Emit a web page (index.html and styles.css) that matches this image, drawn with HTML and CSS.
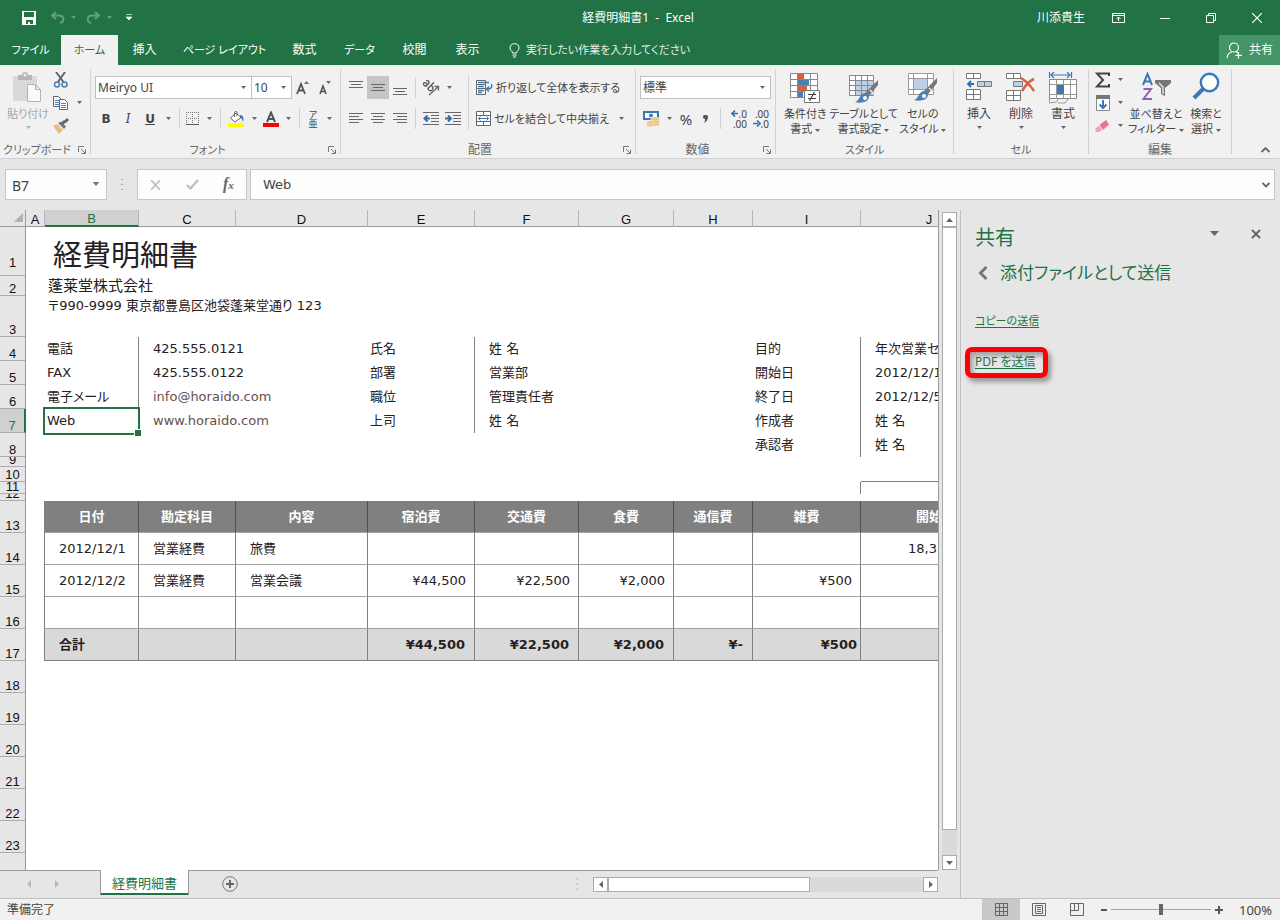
FILE: index.html
```html
<!DOCTYPE html>
<html lang="ja">
<head>
<meta charset="utf-8">
<title>経費明細書1 - Excel</title>
<link rel="stylesheet" href="styles.css">
</head>
<body>
<svg class="defs" aria-hidden="true">
  <symbol id="caret" viewBox="0 0 5 3"><path d="M0 0h5L2.500 3z" fill="currentColor"/></symbol>
  <symbol id="launch" viewBox="0 0 8 8"><path d="M.5 6V.5H6M3 3l4 4M7.500 3.500v4h-4" fill="none" stroke="#777"/></symbol>
</svg>
<div class="app">
  <header class="titlebar">
    <div class="quick">
      <button class="qbtn" aria-label="上書き保存"><svg width="14" height="14" viewBox="0 0 14 14"><path d="M0 0h14v14H0zM2 1v5h10V1zM4 9v4h2v-2h2v2h3V9z" fill="#fff" fill-rule="evenodd"/></svg></button>
      <button class="qbtn faded" aria-label="元に戻す"><svg width="15" height="13" viewBox="0 0 15 13"><path d="M6 1L2 4.500l4 3.500M2 4.500h7c5 0 6 6 1 7.500" fill="none" stroke="#fff" stroke-width="2"/></svg><svg class="caret"><use href="#caret"/></svg></button>
      <button class="qbtn faded" aria-label="やり直し"><svg width="15" height="13" viewBox="0 0 15 13"><path d="M9 1l4 3.500L9 8M13 4.500H6C1 4.500 0 10.500 5 12" fill="none" stroke="#fff" stroke-width="2"/></svg><svg class="caret"><use href="#caret"/></svg></button>
      <button class="qbtn" aria-label="クイック アクセス ツール バーのカスタマイズ"><svg width="6" height="7" viewBox="0 0 6 7"><path d="M0 .5h6M0 3h6L3 6z" fill="#fff" stroke="#fff" stroke-width=".6"/></svg></button>
    </div>
    <div class="doc-title">経費明細書1&nbsp; -&nbsp; Excel</div>
    <div class="window-controls">
      <span class="user">川添貴生</span>
      <button class="wbtn" aria-label="リボンの表示オプション"><svg width="14" height="12" viewBox="0 0 14 12"><path d="M.5 1.500h12v9H.5zM.5 3.500h12M6.500 9V5M4.500 7l2-2 2 2" fill="none" stroke="#fff"/></svg></button>
      <button class="wbtn" aria-label="最小化"><svg width="10" height="10" viewBox="0 0 10 10"><path d="M0 5.500h10" stroke="#fff"/></svg></button>
      <button class="wbtn" aria-label="元に戻す (縮小)"><svg width="10" height="10" viewBox="0 0 10 10"><path d="M.5 2.500h7v7h-7zM2.500 2V.5h7v7H8" fill="none" stroke="#fff"/></svg></button>
      <button class="wbtn" aria-label="閉じる"><svg width="10" height="10" viewBox="0 0 10 10"><path d="M0 0l10 10M10 0L0 10" stroke="#fff" stroke-width="1.200"/></svg></button>
    </div>
  </header>

  <nav class="tabs">
    <button class="tab t61 kana">ファイル</button>
    <button class="tab t57 kana active">ホーム</button>
    <button class="tab t53">挿入</button>
    <button class="tab t107 kana">ページ レイアウト</button>
    <button class="tab t53">数式</button>
    <button class="tab t57 kana">データ</button>
    <button class="tab t53">校閲</button>
    <button class="tab t53">表示</button>
    <button class="tell kana"><svg width="11" height="15" viewBox="0 0 11 15"><path d="M3.500 10C3.500 8 1 7.500 1 4.800 1 2 3 .700 5.500.700S10 2 10 4.800C10 7.500 7.500 8 7.500 10zM3.500 12h4M4 14h3" fill="none" stroke="#fff"/></svg>実行したい作業を入力してください</button>
    <button class="share"><svg width="17" height="17" viewBox="0 0 17 17"><circle cx="8" cy="5.500" r="4.500" fill="none" stroke="#fff" stroke-width="1.200"/><path d="M1 16c.5-4 2-5.500 5-6M10 9.500l2 1.500M12.500 10v6.500M9.500 13.300h6.500" fill="none" stroke="#fff" stroke-width="1.200"/></svg>共有</button>
  </nav>

  <section class="ribbon">
    <div class="group g-clip">
      <div class="gbody">
        <button class="big paste"><svg width="30" height="32" viewBox="0 0 30 32"><path d="M0 4h24v25H0z" fill="#d9d9d9"/><path d="M5 3h4c0-4 6-4 6 0h4v5H5z" fill="#b5b5b5"/><circle cx="12" cy="3" r="1.500" fill="#f0f0f0"/><path d="M14.500 12.500h8l5 5v12h-13zM22.500 12.500v5h5" fill="#fafafa" stroke="#b9aebb"/></svg><span>貼り付け</span><svg class="caret"><use href="#caret"/></svg></button>
        <div class="stack">
          <button class="ib" aria-label="切り取り"><svg width="16" height="16" viewBox="0 0 16 16"><path d="M3 0l7.500 10M12 0L5 10" stroke="#666" stroke-width="2"/><circle cx="4" cy="12.500" r="2.500" fill="none" stroke="#4a80b5" stroke-width="1.500"/><circle cx="11.500" cy="12.500" r="2.500" fill="none" stroke="#4a80b5" stroke-width="1.500"/></svg></button>
          <button class="ib" aria-label="コピー"><svg width="16" height="16" viewBox="0 0 16 16"><path d="M.5 1.500h5l3 3v7h-8z" fill="#fff" stroke="#666"/><path d="M2 5.500h4M2 7.500h4M2 9.500h4" stroke="#4a80b5"/><path d="M6.500 4.500h5l3 3v7h-8z" fill="#fff" stroke="#666"/><path d="M8 8.500h5M8 10.500h5M8 12.500h5" stroke="#4a80b5"/></svg></button>
          <button class="ib" aria-label="書式のコピー"><svg width="16" height="16" viewBox="0 0 16 16"><path d="M0 8l4-2 6 6-4 4z" fill="#e8be7c"/><path d="M5 5l3-1.500 5 5L11 11z" fill="#777"/><path d="M9 6l3-3M12 4l3-3" stroke="#666" stroke-width="3"/></svg></button>
        </div>
        <button class="cb copy-caret" aria-label="コピーのオプション"><svg class="caret"><use href="#caret"/></svg></button>
      </div>
      <div class="glabel kana"><span>クリップボード</span><button class="launch" aria-label="クリップボードの設定"><svg width="8" height="8"><use href="#launch"/></svg></button></div>
    </div>

    <div class="group g-font">
      <div class="gbody col">
        <div class="row">
          <label class="combo font-name"><select aria-label="フォント"><option>Meiryo UI</option></select><svg class="caret"><use href="#caret"/></svg></label>
          <label class="combo font-size"><select aria-label="フォント サイズ"><option>10</option></select><svg class="caret"><use href="#caret"/></svg></label>
          <button class="ib" aria-label="フォント サイズの拡大"><svg width="14" height="16" viewBox="0 0 14 16"><path d="M1 14L5 4l4 10M2.500 10.500h5" fill="none" stroke="#555" stroke-width="1.800"/><path d="M8 4h5l-2.500-3z" fill="#3b78b5"/></svg></button>
          <button class="ib" aria-label="フォント サイズの縮小"><svg width="14" height="16" viewBox="0 0 14 16"><path d="M2 14l3-8 3 8M3 11.500h4" fill="none" stroke="#555" stroke-width="1.600"/><path d="M8 1h5l-2.500 3z" fill="#3b78b5"/></svg></button>
        </div>
        <div class="row">
          <button class="ib fb">B</button><button class="ib fi">I</button><button class="ib fu">U</button><button class="cb" aria-label="下線のオプション"><svg class="caret"><use href="#caret"/></svg></button>
          <i class="sep"></i>
          <button class="ib s" aria-label="罫線"><svg width="14" height="14" viewBox="0 0 14 14"><path d="M.5 0v12M6.500 0v12M12.500 0v12M0 .5h13M0 6.500h13" stroke="#777" stroke-dasharray="1 1"/><path d="M0 12.500h13" stroke="#555"/></svg></button><button class="cb" aria-label="罫線のオプション"><svg class="caret"><use href="#caret"/></svg></button>
          <i class="sep"></i>
          <button class="ib" aria-label="塗りつぶしの色"><svg width="16" height="16" viewBox="0 0 16 16"><path d="M2.500 7L8 2l5 4.500L7 11z" fill="#fff" stroke="#666"/><path d="M6.500 6V1.500C6.500 0 9 0 9 1.500V5" fill="none" stroke="#666"/><path d="M12 4c4 0 4 4 3 7-1-3-1-4-3-4z" fill="#3b78b5"/><path d="M0 12h16v4H0z" fill="#ff0"/></svg></button><button class="cb" aria-label="塗りつぶしのオプション"><svg class="caret"><use href="#caret"/></svg></button>
          <button class="ib m" aria-label="フォントの色"><svg width="16" height="16" viewBox="0 0 16 16"><path d="M4 11L8 1.500l4 9.500M5.500 8h5" fill="none" stroke="#555" stroke-width="2"/><path d="M0 12h16v4H0z" fill="#f00"/></svg></button><button class="cb" aria-label="フォントの色のオプション"><svg class="caret"><use href="#caret"/></svg></button>
          <i class="sep"></i>
          <button class="ib s ruby"><span>ア</span><span>亜</span></button><button class="cb" aria-label="ふりがなのオプション"><svg class="caret"><use href="#caret"/></svg></button>
        </div>
      </div>
      <div class="glabel kana"><span>フォント</span><button class="launch" aria-label="フォントの設定"><svg width="8" height="8"><use href="#launch"/></svg></button></div>
    </div>

    <div class="group g-align">
      <div class="gbody">
        <div class="col">
          <div class="row">
            <button class="ib" aria-label="上揃え"><svg width="14" height="14" viewBox="0 0 14 14"><path d="M0 .5h14M2 3.500h10M0 6.500h14" stroke="#666"/></svg></button>
            <button class="ib on" aria-label="上下中央揃え"><svg width="14" height="14" viewBox="0 0 14 14"><path d="M0 3.500h14M2 6.500h10M0 9.500h14" stroke="#666"/></svg></button>
            <button class="ib" aria-label="下揃え"><svg width="14" height="14" viewBox="0 0 14 14"><path d="M0 7.500h14M2 10.500h10M0 13.500h14" stroke="#666"/></svg></button>
            <i class="sep"></i>
            <button class="ib" aria-label="方向"><svg width="17" height="16" viewBox="0 0 17 16"><g transform="rotate(45 6 6)" fill="none" stroke="#555" stroke-width="1.300"><path d="M0 4c2-2 4-1 4 1v4M4 6C0 5-1 9 1.500 9 3 9 4 8 4 7"/><path d="M7 0v9M7 5c1-2 4-1 4 1.500S8 10 7 8"/></g><path d="M6 15l9-8M11.500 6.500H15.500V10.500" fill="none" stroke="#666" stroke-width="1.300"/></svg></button><button class="cb" aria-label="方向のオプション"><svg class="caret"><use href="#caret"/></svg></button>
          </div>
          <div class="row">
            <button class="ib" aria-label="左揃え"><svg width="14" height="12" viewBox="0 0 14 12"><path d="M0 .5h14M0 3.500h10M0 6.500h14M0 9.500h10" stroke="#666"/></svg></button>
            <button class="ib" aria-label="中央揃え"><svg width="14" height="12" viewBox="0 0 14 12"><path d="M0 .5h14M2 3.500h10M0 6.500h14M2 9.500h10" stroke="#666"/></svg></button>
            <button class="ib" aria-label="右揃え"><svg width="14" height="12" viewBox="0 0 14 12"><path d="M0 .5h14M4 3.500h10M0 6.500h14M4 9.500h10" stroke="#666"/></svg></button>
            <i class="sep"></i>
            <button class="ib" aria-label="インデントを減らす"><svg width="16" height="14" viewBox="0 0 16 14"><path d="M0 .5h16M8 3.500h8M8 6.500h8M8 9.500h8M0 12.500h16" stroke="#666"/><path d="M7 6.500H2M4.500 3.500l-3 3 3 3" fill="none" stroke="#2f6fae" stroke-width="2"/></svg></button>
            <button class="ib" aria-label="インデントを増やす"><svg width="16" height="14" viewBox="0 0 16 14"><path d="M0 .5h16M8 3.500h8M8 6.500h8M8 9.500h8M0 12.500h16" stroke="#666"/><path d="M0 6.500h5M3 3.500l3 3-3 3" fill="none" stroke="#2f6fae" stroke-width="2"/></svg></button>
          </div>
        </div>
        <i class="sep long"></i>
        <div class="col">
          <button class="tb"><svg width="17" height="16" viewBox="0 0 17 16"><path d="M.5.5h9v4h-9zM.5 4.500v4h9v-4M.5 8.500v6h9v-6" fill="#fff" stroke="#666"/><path d="M2 2.500h11M2 6.500h6M2 10.500h6M2 12.500h4M15.500 4c1 4-1 5-4 5M13 6.500L10.500 9l2.500 2.500" fill="none" stroke="#3b78b5" stroke-width="1.400"/></svg>折り返して全体を表示する</button>
          <button class="tb"><svg width="15" height="15" viewBox="0 0 15 15"><path d="M.5.5h14v14H.5zM.5 4.500h14M.5 10.500h14M7.500.5v4M7.500 10.500v4" fill="#fff" stroke="#666"/><path d="M2 7.500h11M4.500 5.500l-2 2 2 2M10.500 5.500l2 2-2 2" fill="none" stroke="#3b78b5"/></svg>セルを結合して中央揃え<svg class="caret end"><use href="#caret"/></svg></button>
        </div>
      </div>
      <div class="glabel"><span>配置</span><button class="launch" aria-label="配置の設定"><svg width="8" height="8"><use href="#launch"/></svg></button></div>
    </div>

    <div class="group g-num">
      <div class="gbody col">
        <div class="row"><label class="combo num-format"><select aria-label="数値の書式"><option>標準</option></select><svg class="caret"><use href="#caret"/></svg></label></div>
        <div class="row">
          <button class="ib" aria-label="通貨表示形式"><svg width="17" height="16" viewBox="0 0 17 16"><path d="M0 0h16v9H0z" fill="#3b78b5"/><path d="M2 2h12v5H2z" fill="#fff"/><circle cx="8" cy="4.500" r="2" fill="#3b78b5"/><g fill="#ecc27e" stroke="#f0f0f0" stroke-width=".5"><ellipse cx="12" cy="13" rx="4.500" ry="2"/><ellipse cx="12" cy="10.500" rx="4.500" ry="2"/><ellipse cx="12" cy="8" rx="4.500" ry="2"/><ellipse cx="7" cy="14" rx="3.500" ry="1.800"/><ellipse cx="7" cy="11.500" rx="3.500" ry="1.800"/></g></svg></button><button class="cb" aria-label="通貨のオプション"><svg class="caret"><use href="#caret"/></svg></button>
          <button class="ib m pct">%</button>
          <button class="ib m" aria-label="桁区切りスタイル"><svg width="6" height="8" viewBox="0 0 6 8"><path d="M0 2c0-3 5-3 5 0 0 3-2 5-4 6 1-2 1-3 1-4-1 0-2-1-2-2z" fill="#555"/></svg></button>
          <i class="sep"></i>
          <button class="ib dec" aria-label="小数点以下の表示桁数を増やす"><span><svg width="8" height="7" viewBox="0 0 8 7"><path d="M7 3.500H2M4 .5l-3 3 3 3" fill="none" stroke="#2f6fae" stroke-width="1.600"/></svg>.0</span><span>.00</span></button>
          <button class="ib dec" aria-label="小数点以下の表示桁数を減らす"><span>.00</span><span><svg width="8" height="7" viewBox="0 0 8 7"><path d="M0 3.500h5M4 .5l3 3-3 3" fill="none" stroke="#2f6fae" stroke-width="1.600"/></svg>.0</span></button>
        </div>
      </div>
      <div class="glabel"><span>数値</span><button class="launch" aria-label="数値の設定"><svg width="8" height="8"><use href="#launch"/></svg></button></div>
    </div>

    <div class="group g-style">
      <div class="gbody">
        <button class="big w52 kana"><svg width="30" height="32" viewBox="0 0 30 32"><path d="M.5 1.500h27v24H.5z" fill="#fff"/><path d="M8 2h6v5H8zM8 14h9v5H8z" fill="#d8603c"/><path d="M8 8h11v5H8zM8 20h5v5H8z" fill="#4a80b5"/><path d="M.5 1.500h27v24H.5zM.5 7.500h27M.5 13.500h27M.5 19.500h27M7.500 1.500v24M20.500 1.500v24" fill="none" stroke="#888"/><path d="M14.500 18.500h15v12h-15z" fill="#fff" stroke="#777"/><path d="M18 22.500h8M18 26.500h8M24.500 20l-5 9" stroke="#444" stroke-width="1.200"/></svg><span>条件付き<br>書式 <svg class="caret"><use href="#caret"/></svg></span></button>
        <button class="big w66 kana"><svg width="30" height="32" viewBox="0 0 30 32"><path d="M.5 3.500h24v20H.5z" fill="#fff"/><path d="M7 9h17v14H7z" fill="#bdd0e9"/><path d="M.5 3.500h24v20H.5zM.5 8.500h24M.5 13.500h24M.5 18.500h24M6.500 3.500v20M12.500 3.500v20M18.500 3.500v20" fill="none" stroke="#888"/><path d="M29 8v5L20 24l-4-3z" fill="#777"/><path d="M21 18l4 4" stroke="#f0f0f0" stroke-width="1.500"/><path d="M6 30c5-1 4-9 11-9 5 2 3 8-2 9-3 1-6 1-9 0z" fill="#4a80b5"/><circle cx="16" cy="26" r="2" fill="#fff"/></svg><span>テーブルとして<br>書式設定 <svg class="caret"><use href="#caret"/></svg></span></button>
        <button class="big w54 kana"><svg width="30" height="32" viewBox="0 0 30 32"><path d="M.5 1.500h25v21H.5z" fill="#fff"/><path d="M6 7h13v10H6z" fill="#bdd0e9"/><path d="M.5 1.500h25v21H.5zM.5 6.500h25M.5 17.500h25M5.500 1.500v21M19.500 1.500v21" fill="none" stroke="#999"/><path d="M29 6v5L20 22l-4-3z" fill="#777"/><path d="M21 16l4 4" stroke="#f0f0f0" stroke-width="1.500"/><path d="M6 28c5-1 4-9 11-9 5 2 3 8-2 9-3 1-6 1-9 0z" fill="#4a80b5"/><circle cx="16" cy="24" r="2" fill="#fff"/></svg><span>セルの<br>スタイル <svg class="caret"><use href="#caret"/></svg></span></button>
      </div>
      <div class="glabel kana"><span>スタイル</span></div>
    </div>

    <div class="group g-cell">
      <div class="gbody">
        <button class="big w42"><svg width="28" height="32" viewBox="0 0 28 32"><path d="M1.500 1.500h14v5h-14zM8.500 1.500v5M1.500 17.500h14v10h-14zM1.500 22.500h14M8.500 17.500v10" fill="#fff" stroke="#777"/><path d="M12.500 9.500h14v5h-14zM19.500 9.500v5" fill="#bdd0e9" stroke="#777"/><path d="M9 12H4M6 9l-3 3 3 3" fill="none" stroke="#2f6fae" stroke-width="1.800"/></svg><span>挿入</span><svg class="caret"><use href="#caret"/></svg></button>
        <button class="big w42"><svg width="30" height="32" viewBox="0 0 30 32"><path d="M.5 1.500h14v5H.5zM7.500 1.500v5M.5 18.500h14v10H.5zM.5 23.500h14M7.500 18.500v10" fill="#fff" stroke="#777"/><path d="M7.500 9.500h9v5h-9z" fill="#bdd0e9" stroke="#777"/><path d="M15 6c5 3 9 7 13 13M28 7c-5 2-9 7-12 12" fill="none" stroke="#d8603c" stroke-width="2.500"/></svg><span>削除</span><svg class="caret"><use href="#caret"/></svg></button>
        <button class="big w42"><svg width="30" height="32" viewBox="0 0 30 32"><path d="M1.500 0v6M23.500 0v6M3 3h19M6 0L3 3l3 3M19 0l3 3-3 3" fill="none" stroke="#3b78b5" stroke-width="1.200"/><path d="M1.500 7.500h27v19h-27z" fill="#fff" stroke="#888"/><path d="M1.500 12.500h27M1.500 22.500h27M8.500 7.500v19M15.500 7.500v19M22.500 7.500v19M1.500 27v4l7-1 2-3M10 31h7l3-4" fill="none" stroke="#999"/><path d="M9 13h7v9H9z" fill="#3b78b5"/></svg><span>書式</span><svg class="caret"><use href="#caret"/></svg></button>
      </div>
      <div class="glabel kana"><span>セル</span></div>
    </div>

    <div class="group g-edit">
      <div class="gbody">
        <div class="stack">
          <button class="ib wide" aria-label="オート SUM"><svg width="16" height="16" viewBox="0 0 16 16"><path d="M14 4V1.500H2L8 8l-6 6.500h12V12" fill="none" stroke="#444" stroke-width="2"/></svg><svg class="caret"><use href="#caret"/></svg></button>
          <button class="ib wide" aria-label="フィル"><svg width="16" height="16" viewBox="0 0 16 16"><path d="M1.500.5h13v15h-13z" fill="#fff" stroke="#888"/><path d="M1 0h14v4H1z" fill="#777"/><path d="M8 5v8M4.500 9.500L8 13l3.500-3.500" fill="none" stroke="#3b78b5" stroke-width="2"/></svg><svg class="caret"><use href="#caret"/></svg></button>
          <button class="ib wide" aria-label="クリア"><svg width="16" height="14" viewBox="0 0 16 14"><path d="M4.500 6L11 1l3 4.500L8 11z" fill="#e8768a"/><path d="M4 6.500L7 11l-3 2H1l-1-3z" fill="#efa3b0"/></svg><svg class="caret"><use href="#caret"/></svg></button>
        </div>
        <button class="big w58 kana"><svg width="30" height="32" viewBox="0 0 30 32"><path d="M2 13L6.500 2 11 13M3.500 9.500h6" fill="none" stroke="#3b78b5" stroke-width="2"/><path d="M2.500 17H10L2.500 27H11" fill="none" stroke="#9160b5" stroke-width="2"/><path d="M14 8h16v3l-6 5v8l-4-2v-6l-6-5z" fill="#777"/><path d="M18 11l4 4v7" fill="none" stroke="#eee" stroke-width="1.300"/></svg><span>並べ替えと<br>フィルター <svg class="caret"><use href="#caret"/></svg></span></button>
        <button class="big w42 kana"><svg width="28" height="32" viewBox="0 0 28 32"><circle cx="17.500" cy="10.500" r="8.700" fill="#fff" stroke="#3b78b5" stroke-width="2.400"/><path d="M11 17l-9 9" stroke="#3b78b5" stroke-width="4"/></svg><span>検索と<br>選択 <svg class="caret"><use href="#caret"/></svg></span></button>
      </div>
      <div class="glabel"><span>編集</span></div>
    </div>
    <button class="collapse" aria-label="リボンを折りたたむ"><svg width="9" height="6" viewBox="0 0 9 6"><path d="M.5 5l4-4 4 4" fill="none" stroke="#666" stroke-width="1.800"/></svg></button>
  </section>

  <section class="formula">
    <label class="namebox"><input type="text" value="B7" aria-label="名前ボックス"><svg class="caret"><use href="#caret"/></svg></label>
    <span class="grip"></span>
    <div class="fx">
      <button aria-label="キャンセル"><svg width="11" height="10" viewBox="0 0 11 10"><path d="M1 0l9 10M10 0L1 10" stroke="#c0c0c0" stroke-width="1.800"/></svg></button>
      <button aria-label="入力"><svg width="13" height="11" viewBox="0 0 13 11"><path d="M1 6l3.500 3.500L12 1" fill="none" stroke="#c0c0c0" stroke-width="2.400"/></svg></button>
      <button class="fxb" aria-label="関数の挿入"><em>f</em><small>x</small></button>
    </div>
    <label class="fbox"><input type="text" value="Web" aria-label="数式バー"><svg width="8" height="6" viewBox="0 0 8 6"><path d="M.5 1L4 4.500 7.500 1" fill="none" stroke="#666" stroke-width="1.800"/></svg></label>
  </section>

  <main class="work">
    <div class="book">
      <div class="sheet">
        <table>
          <colgroup><col class="cn"><col class="ca"><col class="c-b"><col class="cc"><col class="c-d"><col class="ce"><col class="cf"><col class="cg"><col class="ch"><col class="ci"><col class="cj"></colgroup>
          <thead><tr><th class="corner"><svg width="9" height="9" viewBox="0 0 9 9"><path d="M9 0v9H0z" fill="#b0b0b0"/></svg></th><th>A</th><th class="sel">B</th><th>C</th><th>D</th><th>E</th><th>F</th><th>G</th><th>H</th><th>I</th><th>J</th></tr></thead>
          <tbody>
            <tr class="h49"><th><div>1</div></th><td></td><td class="title" colspan="9">経費明細書</td></tr>
            <tr class="h20"><th><div>2</div></th><td></td><td class="company" colspan="9">蓬莱堂株式会社</td></tr>
            <tr class="h41"><th><div>3</div></th><td></td><td class="address" colspan="9">〒990-9999 東京都豊島区池袋蓬莱堂通り 123</td></tr>
            <tr class="h24"><th><div>4</div></th><td></td><td class="vr">電話</td><td class="in" colspan="2">425.555.0121</td><td class="vr">氏名</td><td class="in" colspan="3">姓 名</td><td class="vr">目的</td><td class="in">年次営業セミナー</td></tr>
            <tr class="h24"><th><div>5</div></th><td></td><td class="vr">FAX</td><td class="in" colspan="2">425.555.0122</td><td class="vr">部署</td><td class="in" colspan="3">営業部</td><td class="vr">開始日</td><td class="in">2012/12/1</td></tr>
            <tr class="h24"><th><div>6</div></th><td></td><td class="vr">電子メール</td><td class="in link" colspan="2">info@horaido.com</td><td class="vr">職位</td><td class="in" colspan="3">管理責任者</td><td class="vr">終了日</td><td class="in">2012/12/5</td></tr>
            <tr class="h24"><th class="sel"><div>7</div></th><td></td><td class="vr active-cell">Web</td><td class="in link" colspan="2">www.horaido.com</td><td class="vr">上司</td><td class="in" colspan="3">姓 名</td><td class="vr">作成者</td><td class="in">姓 名</td></tr>
            <tr class="h24"><th><div>8</div></th><td colspan="8"></td><td class="vr">承認者</td><td class="in">姓 名</td></tr>
            <tr class="h10"><th><div>9</div></th><td colspan="10"></td></tr>
            <tr class="h15"><th><div>10</div></th><td colspan="9"></td><td class="hr"></td></tr>
            <tr class="h12"><th><div>11</div></th><td colspan="9" class="vr"></td><td></td></tr>
            <tr class="h7"><th><div>12</div></th><td colspan="10"></td></tr>
            <tr class="h32 head"><th><div>13</div></th><td class="edge"></td><td>日付</td><td>勘定科目</td><td>内容</td><td>宿泊費</td><td>交通費</td><td>食費</td><td>通信費</td><td>雑費</td><td>開始</td></tr>
            <tr class="h32 line"><th><div>14</div></th><td class="edge"></td><td class="in">2012/12/1</td><td class="in">営業経費</td><td class="in">旅費</td><td></td><td></td><td></td><td></td><td></td><td class="meter">18,3</td></tr>
            <tr class="h32 line"><th><div>15</div></th><td class="edge"></td><td class="in">2012/12/2</td><td class="in">営業経費</td><td class="in">営業会議</td><td class="num">¥44,500</td><td class="num">¥22,500</td><td class="num">¥2,000</td><td></td><td class="num">¥500</td><td></td></tr>
            <tr class="h32 line"><th><div>16</div></th><td class="edge"></td><td></td><td></td><td></td><td></td><td></td><td></td><td></td><td></td><td></td></tr>
            <tr class="h32 line total"><th><div>17</div></th><td class="edge"></td><td class="in">合計</td><td></td><td></td><td class="num">¥44,500</td><td class="num">¥22,500</td><td class="num">¥2,000</td><td class="num">¥-</td><td class="num tight">¥500</td><td></td></tr>
            <tr class="h32"><th><div>18</div></th><td colspan="10"></td></tr>
            <tr class="h32"><th><div>19</div></th><td colspan="10"></td></tr>
            <tr class="h32"><th><div>20</div></th><td colspan="10"></td></tr>
            <tr class="h32"><th><div>21</div></th><td colspan="10"></td></tr>
            <tr class="h32"><th><div>22</div></th><td colspan="10"></td></tr>
            <tr class="h32"><th><div>23</div></th><td colspan="10"></td></tr>
            <tr class="h32"><th><div></div></th><td colspan="10"></td></tr>
          </tbody>
        </table>
      </div>
      <div class="vscroll">
        <button aria-label="上へ"><svg width="7" height="4" viewBox="0 0 7 4"><path d="M0 4h7L3.500 0z" fill="#666"/></svg></button>
        <div class="vtrack"><div class="vthumb"></div></div>
        <button aria-label="下へ"><svg width="7" height="4" viewBox="0 0 7 4"><path d="M0 0h7L3.500 4z" fill="#666"/></svg></button>
      </div>
      <div class="sheetbar">
        <div class="navs"><svg width="4" height="8" viewBox="0 0 4 8"><path d="M4 0v8L0 4z" fill="#b8b8b8"/></svg><svg width="4" height="8" viewBox="0 0 4 8"><path d="M0 0v8l4-4z" fill="#b8b8b8"/></svg></div>
        <button class="sheet-tab">経費明細書</button>
        <button class="add" aria-label="新しいシート"><svg width="16" height="16" viewBox="0 0 16 16"><circle cx="8" cy="8" r="7.300" fill="none" stroke="#777"/><path d="M4 8h8M8 4v8" stroke="#666" stroke-width="2"/></svg></button>
        <span class="grip"></span>
        <div class="hscroll">
          <button aria-label="左へ"><svg width="4" height="7" viewBox="0 0 4 7"><path d="M4 0v7L0 3.500z" fill="#666"/></svg></button>
          <div class="htrack"><div class="hthumb"></div></div>
          <button aria-label="右へ"><svg width="4" height="7" viewBox="0 0 4 7"><path d="M0 0v7l4-3.500z" fill="#666"/></svg></button>
        </div>
      </div>
    </div>
    <aside class="pane">
      <div class="pane-head"><h2>共有</h2><button aria-label="作業ウィンドウのオプション"><svg width="9" height="5" viewBox="0 0 9 5"><path d="M0 0h9L4.500 5z" fill="#666"/></svg></button><button aria-label="閉じる"><svg width="10" height="10" viewBox="0 0 10 10"><path d="M1 1l8 8M9 1L1 9" stroke="#666" stroke-width="2"/></svg></button></div>
      <div class="pane-sub"><button aria-label="戻る"><svg width="10" height="14" viewBox="0 0 10 14"><path d="M8.500 1L2.500 7l6 6" fill="none" stroke="#777" stroke-width="3"/></svg></button><h3>添付ファイルとして送信</h3></div>
      <div class="links"><a href="#" class="kana">コピーの送信</a><a href="#" class="marked">PDF を送信</a></div>
    </aside>
  </main>

  <footer class="status">
    <span class="ready">準備完了</span>
    <button class="view on" aria-label="標準"><svg width="13" height="13" viewBox="0 0 13 13"><path d="M.5.500h12v12H.5zM.5 4.500h12M.5 8.500h12M4.500.5v12M8.500.5v12" fill="none" stroke="#666"/></svg></button>
    <button class="view" aria-label="ページ レイアウト"><svg width="14" height="13" viewBox="0 0 14 13"><path d="M.5.500h13v12H.5zM3.500 2.500h7v8h-7zM5 4.500h4M5 6.500h4M5 8.500h4" fill="none" stroke="#666"/></svg></button>
    <button class="view" aria-label="改ページ プレビュー"><svg width="14" height="13" viewBox="0 0 14 13"><path d="M.5.500h13v12H.5zM4.500.5v7M8.500.5v7M.5 7.500h8" fill="none" stroke="#666"/></svg></button>
    <button class="zoom" aria-label="縮小"><svg width="6" height="8" viewBox="0 0 6 8"><path d="M0 4h6" stroke="#555" stroke-width="2"/></svg></button>
    <input class="slider" type="range" min="0" max="200" value="100" aria-label="ズーム">
    <button class="zoom" aria-label="拡大"><svg width="8" height="8" viewBox="0 0 8 8"><path d="M0 4h8M4 0v8" stroke="#555" stroke-width="2"/></svg></button>
    <span class="percent">100%</span>
  </footer>
</div>
</body>
</html>
```

FILE: styles.css
```css
* { box-sizing: border-box; }

body {
  margin: 0;
  font: 12px/16px "Noto Sans", "Noto Sans CJK JP", sans-serif;
  font-feature-settings: "palt";
  color: #444;
  background: #e6e6e6;
}

button, input, select {
  font: inherit;
  font-feature-settings: inherit;
  color: inherit;
  border: 0;
  padding: 0;
  margin: 0;
  background: none;
  border-radius: 0;
}

svg { display: block; flex: none; }
.defs { position: absolute; width: 0; height: 0; }
.caret { width: 5px; height: 3px; color: #666; }
.kana { font-size: 11px; }

.app { display: flex; flex-direction: column; height: 100vh; overflow: hidden; }

/* title bar */
.titlebar {
  display: grid;
  grid-template-columns: 1fr auto 1fr;
  align-items: center;
  height: 35px;
  flex: none;
  background: #217346;
  color: #fff;
}
.quick { display: flex; align-items: center; padding-left: 22px; gap: 14px; }
.qbtn { display: flex; align-items: center; gap: 6px; height: 20px; }
.faded { opacity: .3; }
.qbtn .caret { color: #fff; }
.quick .qbtn:nth-child(2) { margin-right: -4px; }
.doc-title { white-space: nowrap; line-height: 30px; padding-right: 4px; }
.window-controls { display: flex; justify-content: flex-end; align-items: center; height: 30px; }
.user { margin-right: 11px; }
.wbtn { width: 46px; height: 30px; display: grid; place-items: center; }

/* ribbon tabs */
.tabs { display: flex; height: 30px; flex: none; background: #217346; color: #fff; }
.tab { white-space: nowrap; }
.tab.active { background: #f1f1f1; color: #217346; }
.t53 { width: 53px; }
.t57 { width: 57px; }
.t61 { width: 61px; }
.t107 { width: 107px; }
.tell { display: flex; align-items: center; gap: 6px; padding-left: 15px; color: #e6f0ea; white-space: nowrap; }
.share { margin-left: auto; width: 61px; display: flex; align-items: center; justify-content: center; gap: 6px; background: #439467; }

/* ribbon */
.ribbon {
  display: flex;
  flex: none;
  height: 94px;
  padding: 4px 0;
  background: #f1f1f1;
  border-bottom: 1px solid #d0d0d0;
}
.group { display: flex; flex-direction: column; flex: none; border-right: 1px solid #d2d2d2; }
.gbody { display: flex; flex: none; height: 74px; padding: 0 4px; }
.col { display: flex; flex-direction: column; }
.gbody.col, .gbody > .col { padding-top: 7px; gap: 8px; }
.row { display: flex; align-items: center; height: 23px; }
.glabel { display: flex; flex: none; height: 14px; line-height: 14px; color: #666; white-space: nowrap; }
.glabel span { flex: 1; text-align: center; }
.launch { width: 16px; display: grid; place-items: center; }
.g-clip { width: 91px; }
.g-font { width: 250px; }
.g-align { width: 295px; }
.g-num { width: 140px; }
.g-style { width: 178px; }
.g-cell { width: 135px; }
.g-edit { width: 143px; }

.ib { width: 22px; height: 23px; display: grid; place-items: center; }
.ib.s { width: 18px; }
.ib.m { width: 20px; }
.ib.on { background: #c5c5c5; }
.ib.wide { width: 34px; display: flex; align-items: center; padding-left: 2px; gap: 7px; }
.cb { width: 14px; height: 23px; display: grid; place-items: center; }
.stack { display: flex; flex-direction: column; margin-top: -1px; }
.copy-caret { margin-top: 22px; }
.fb, .fi, .fu { font-family: "DejaVu Sans", sans-serif; font-weight: bold; }
.fi { font-family: "DejaVu Serif", serif; font-style: italic; font-weight: normal; }
.fu { text-decoration: underline; }
.pct { font-size: 15px; }
.ruby { font-size: 9px; line-height: 9px; align-content: center; }
.ruby span { height: 9px; }
.dec { font-size: 10px; line-height: 10px; align-content: center; justify-items: end; }
.dec span { display: flex; align-items: center; }
.sep { flex: none; width: 1px; height: 21px; margin: 0 4px; background: #d2d2d2; }
.sep.long { height: 55px; margin-top: 6px; }
.tb { display: flex; align-items: center; gap: 3px; height: 23px; padding-left: 3px; white-space: nowrap; font-size: 11px; }
.tb .end { margin-left: 7px; }

.combo { position: relative; display: block; height: 23px; border: 1px solid #c0c0c0; background: #fff; }
.combo + .combo { border-left: 0; }
.combo select { appearance: none; width: 100%; height: 21px; padding-left: 2px; }
.combo .caret { position: absolute; right: 5px; top: 9px; pointer-events: none; }
.font-name { width: 157px; }
.font-size { width: 40px; }
.num-format { width: 131px; }

.big { display: flex; flex-direction: column; align-items: center; justify-content: flex-start; padding-top: 3px; line-height: 15px; white-space: nowrap; }
.big > span { padding-top: 2px; }
.big > .caret { margin-top: 5px; }
.big span .caret { display: inline-block; vertical-align: middle; }
.paste { width: 47px; padding-left: 2px; color: #a6a6a6; font-size: 11px; }
.paste .caret { color: #b0b0b0; }
.w42 { width: 42px; }
.w52 { width: 52px; }
.w54 { width: 54px; }
.w58 { width: 58px; }
.w66 { width: 66px; }
.collapse { margin-left: auto; width: 30px; align-self: flex-end; height: 8px; display: grid; place-items: center; }

/* formula bar */
.formula { display: flex; flex: none; padding: 10px 5px; height: 51px; }
.formula > * { height: 31px; }
.namebox, .fx, .fbox { position: relative; display: flex; align-items: center; background: #fdfdfd; border: 1px solid #c6c6c6; }
.namebox { width: 102px; padding: 3px 6px 0; }
.namebox input, .fbox input { width: 100%; font: 13px/20px "DejaVu Sans", sans-serif; }
.namebox .caret { width: 8px; height: 4px; margin-top: -5px; color: #777; }
.namebox input { font-family: "Noto Sans", sans-serif; font-size: 14px; }
.grip { width: 30px; background: radial-gradient(circle, #aaa 1px, transparent 1px) center / 30px 5px content-box; padding: 8px 0; }
.fx { width: 110px; justify-content: space-around; }
.fxb { font-family: "Liberation Serif", serif; font-size: 16px; font-weight: bold; color: #666; }
.fxb small { font-size: 11px; font-style: italic; }
.fbox { flex: 1; margin-left: 3px; padding: 0 4px 0 12px; }

/* worksheet and pane */
.work { display: flex; flex: 1; min-height: 0; }
.book { flex: 1; min-width: 0; display: grid; grid-template-columns: minmax(0, 1fr) 21px; grid-template-rows: minmax(0, 1fr) 28px; }
.sheet { overflow: hidden; background: #fff; border-right: 1px solid #9a9a9a; }

table {
  table-layout: fixed;
  width: 100%;
  min-width: 998px;
  border-spacing: 0;
  font: 13px/19px "DejaVu Sans", "Noto Sans CJK JP", sans-serif;
  font-feature-settings: "palt";
  color: #262022;
}
.cn { width: 26px; }
.ca { width: 19px; }
.c-b { width: 94px; }
.cc { width: 97px; }
.c-d { width: 132px; }
.ce { width: 107px; }
.cf { width: 104px; }
.cg { width: 95px; }
.ch { width: 79px; }
.ci { width: 108px; }
th { padding: 0; font: 13px/13px "Liberation Sans", sans-serif; color: #111; background: #e6e6e6; }
thead th { height: 16px; padding-top: 2px; border-right: 1px solid #b5b5b5; border-bottom: 1px solid #9a9a9a; }
thead .corner { padding: 0 3px 2px 14px; border-right-color: #9a9a9a; }
thead .sel { background: #d0d0d0; color: #217346; border-bottom: 2px solid #217346; }
tbody th { border-right: 1px solid #9a9a9a; border-bottom: 1px solid #ababab; }
tbody th div { display: flex; align-items: flex-end; justify-content: center; height: calc(var(--h) - 1px); overflow: hidden; }
tbody .sel { background: #d0d0d0; color: #217346; border-right: 2px solid #217346; }
.h7 { --h: 7px; }
.h10 { --h: 10px; }
.h12 { --h: 12px; }
.h15 { --h: 15px; }
.h20 { --h: 20px; }
.h24 { --h: 24px; }
.h32 { --h: 32px; }
.h41 { --h: 41px; }
.h49 { --h: 49px; }
.h49 th div { padding-bottom: 6px; }
td { padding: 0 2px; white-space: nowrap; }
.h24 td { padding-bottom: 2px; }
td.title { font-size: 29px; line-height: 40px; padding: 9px 0 0 8px; }
td.company { font-size: 15px; padding-left: 3px; }
td.address { vertical-align: top; padding-left: 3px; }
td.in { padding-left: 14px; }
.vr { border-right: 1px solid #808080; }
.hr { border-bottom: 1px solid #808080; }
.link { color: #66504c; }
.active-cell { position: relative; }
.active-cell::before { content: ""; position: absolute; inset: -2px; border: 2px solid #217346; }
.active-cell::after { content: ""; position: absolute; right: -3px; bottom: -3px; width: 6px; height: 6px; background: #217346; border: solid #fff; border-width: 1px 0 0 1px; }
.head td, .line td { border-right: 1px solid #808080; border-bottom: 1px solid #a0a0a0; }
.head td { background: #808080; color: #fff; font-weight: bold; text-align: center; border-right-color: #505050; }
.head td.edge, .line td.edge { background: #fff; border-bottom: 0; border-right-color: #808080; }
.total td { background: #d9d9d9; font-weight: bold; border-bottom-color: #808080; }
td.num { text-align: right; padding-right: 8px; }
.total td.num { padding-right: 9px; }
.total td.tight { padding-right: 3px; }
td.meter { padding-left: 47px; }

.vscroll { display: flex; flex-direction: column; margin: 2px 2px 0 3px; width: 16px; }
.vscroll button, .hscroll button { flex: none; width: 15px; height: 15px; display: grid; place-items: center; background: #fff; border: 1px solid #ababab; }
.vtrack { flex: 1; width: 15px; background: #dadada; }
.vthumb { height: 96%; background: #fff; border: 1px solid #ababab; }
.sheetbar { grid-column: 1 / 3; display: flex; align-items: flex-start; padding-right: 22px; background: linear-gradient(#9a9a9a, #9a9a9a) left top / calc(100% - 22px) 1px no-repeat; }
.navs { display: flex; gap: 24px; width: 100px; padding: 10px 0 0 27px; }
.sheet-tab { height: 25px; width: 89px; background: #fff; border: solid #9a9a9a; border-width: 0 1px; box-shadow: inset 0 -2px #217346; color: #217346; font-size: 13px; }
.add { margin: 6px 0 0 33px; }
.sheetbar .grip { margin-left: auto; width: 31px; height: 28px; }
.hscroll { display: flex; width: 345px; margin-top: 7px; }
.htrack { flex: 1; background: #dadada; }
.hthumb { width: 64%; height: 15px; background: #fff; border: 1px solid #ababab; }

.pane { width: 320px; flex: none; border-left: 1px solid #c0c0c0; padding: 15px 14px 0; color: #217346; }
.pane h2, .pane h3 { margin: 0; font-weight: normal; }
.pane-head { display: flex; align-items: flex-start; }
.pane-head h2 { flex: 1; font-size: 20px; line-height: 26px; }
.pane-head button { height: 17px; display: grid; place-items: center; width: 41px; }
.pane-head button:last-child { margin-right: -10px; }
.pane-sub { display: flex; align-items: center; gap: 12px; padding: 9px 0 0 3px; }
.pane-sub h3 { font-size: 17px; line-height: 26px; }
.links { display: flex; flex-direction: column; align-items: flex-start; gap: 25px; padding-top: 27px; }
.links a { color: #217346; text-underline-offset: 2px; }
.marked { position: relative; }
.marked::after {
  content: "";
  position: absolute;
  inset: -7px -13px -8px -10px;
  border: 5px solid #fb0007;
  border-radius: 7px;
  box-shadow: 3px 4px 5px rgba(0, 0, 0, .35), inset 3px 4px 5px rgba(0, 0, 0, .3);
}

/* status bar */
.status { display: flex; align-items: center; flex: none; height: 22px; background: #f1f1f1; border-top: 1px solid #c0c0c0; }
.ready { flex: 1; padding-left: 7px; }
.view { width: 38px; height: 21px; display: grid; place-items: center; }
.view.on { background: #c8c8c8; }
.zoom { width: 15px; display: grid; place-items: center; }
.slider { appearance: none; width: 100px; height: 20px; background: linear-gradient(#a6a6a6, #a6a6a6) center / 100% 1px no-repeat; }
.slider::-webkit-slider-thumb { appearance: none; width: 4px; height: 11px; background: #666; }
.percent { width: 54px; padding-left: 13px; font-size: 13px; line-height: 18px; }
```
